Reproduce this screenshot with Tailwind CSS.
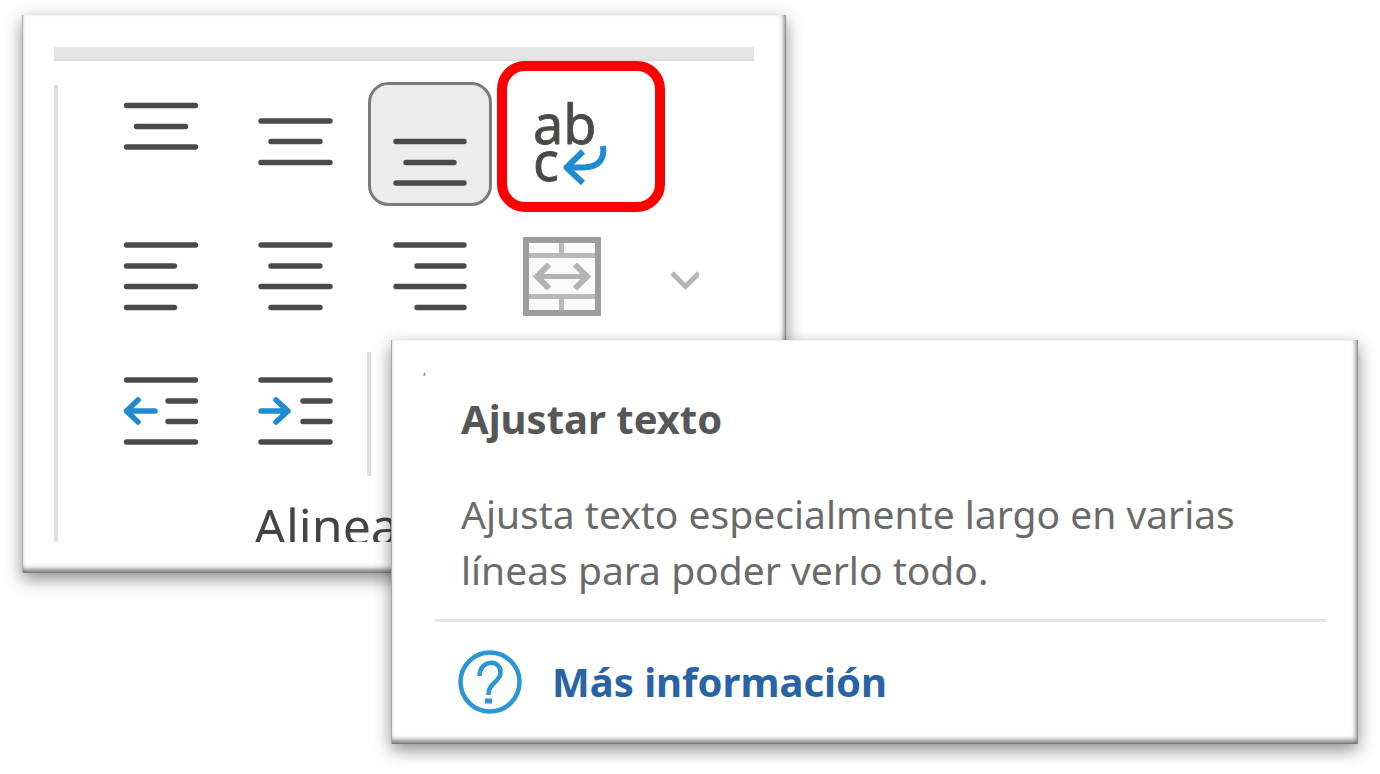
<!DOCTYPE html>
<html lang="es">
<head>
<meta charset="utf-8">
<meta name="viewport" content="width=device-width, initial-scale=1">
<title>Ajustar texto</title>
<script src="https://cdn.jsdelivr.net/npm/@tailwindcss/browser@4"></script>
</head>
<body class="bg-white font-['Noto_Sans','Open_Sans',sans-serif]">
<main class="grid grid-cols-[369px_395px_1fr] grid-rows-[325px_233px_auto] px-[22px] pt-[15px] pb-[29px]">

  <!-- Ribbon group -->
  <section aria-label="Alineación" class="col-start-1 col-end-3 row-start-1 row-end-3 bg-white p-8 shadow-[0_6px_16px_rgba(0,0,0,0.45),inset_1px_0_0_#a8a8a8,inset_-1px_0_0_#8f8f8f,inset_0_-1px_0_#7c7c7c,inset_2px_0_3px_rgba(0,0,0,0.12),inset_-4px_-6px_5px_-2px_rgba(0,0,0,0.5)]">
    <div class="flex h-[495px] flex-col overflow-hidden">
      <div class="h-[14px] shrink-0 border-b-2 border-[#dcdcdc] bg-[#e5e5e5]"></div>
      <div class="mt-6 flex min-h-0 flex-1 border-l-4 border-[#dedede]">
        <div class="-mt-[3px] pl-[41px]">
          <div class="grid grid-cols-[124px_124px_124px_124px_60px] grid-rows-[124px_124px_124px] gap-x-[11px] gap-y-[9px]">
            <button type="button" aria-label="Alinear en la parte superior">
              <svg class="size-full" viewBox="0 0 124 124" fill="none" stroke="#4a4a48" stroke-width="5.4" stroke-linecap="round"><path d="M27.500 23.500H96.500M37.500 44.500H86.500M27.500 65H96.500"/></svg>
            </button>
            <button type="button" aria-label="Alinear en el medio">
              <svg class="size-full" viewBox="0 0 124 124" fill="none" stroke="#4a4a48" stroke-width="5.4" stroke-linecap="round"><path d="M27 39H96M37 59.500H86M27 80.500H96"/></svg>
            </button>
            <button type="button" aria-pressed="true" aria-label="Alinear en la parte inferior">
              <svg class="size-full overflow-visible" viewBox="0 0 124 124" fill="none" stroke="#4a4a48" stroke-width="5.4" stroke-linecap="round"><rect x="0.500" y="1.500" width="121" height="121" rx="19" fill="#ececec" stroke="#7b7b7b" stroke-width="3"/><path d="M27 59.500H95M37 80.500H85M27 101H95"/></svg>
            </button>
            <button type="button" aria-label="Ajustar texto" class="relative">
              <svg class="size-full" viewBox="0 0 124 124" fill="none" stroke-linecap="round" stroke-linejoin="round">
                <g class="font-['Noto_Sans','Open_Sans',sans-serif] text-[54px]" fill="#4a4a48" stroke="#4a4a48" stroke-width="0.8">
                  <text x="29" y="62">ab</text>
                  <text x="29" y="99">c</text>
                </g>
                <path d="M79 69.500L62.500 85.500L79 101M63 85.500H80C94 85 101 78 99 64" stroke="#fff" stroke-width="9" stroke-linecap="butt"/>
                <path d="M79 69.500L62.500 85.500L79 101M63 85.500H80C94 85 101 78 99 64" stroke="#1e8bd2" stroke-width="6" stroke-linecap="butt"/>
              </svg>
              <span class="absolute -top-[21px] -left-[7px] h-[151px] w-[168px] rounded-[28px] border-10 border-[#ff0000]"></span>
            </button>
            <span></span>

            <button type="button" aria-label="Alinear a la izquierda">
              <svg class="size-full" viewBox="0 0 124 124" fill="none" stroke="#4a4a48" stroke-width="5.4" stroke-linecap="round"><path d="M27.500 30H96.500M27.500 51H75.500M27.500 71.500H96.500M27.500 92.500H75.500"/></svg>
            </button>
            <button type="button" aria-label="Centrar">
              <svg class="size-full" viewBox="0 0 124 124" fill="none" stroke="#4a4a48" stroke-width="5.4" stroke-linecap="round"><path d="M27 30H96M37 51H86M27 71.500H96M37 92.500H86"/></svg>
            </button>
            <button type="button" aria-label="Alinear a la derecha">
              <svg class="size-full" viewBox="0 0 124 124" fill="none" stroke="#4a4a48" stroke-width="5.4" stroke-linecap="round"><path d="M27 30H95M48 51H95M27 71.500H95M48 92.500H95"/></svg>
            </button>
            <button type="button" aria-label="Combinar y centrar">
              <svg class="size-full" viewBox="0 0 124 124" fill="none">
                <rect x="22" y="25" width="72" height="73" fill="#fafafa"/>
                <path d="M22 40.500H94M22 81.500H94M57.500 25V40M57.500 82V98" stroke="#b9b9b9" stroke-width="5"/>
                <path d="M33 61.500H83" stroke="#b3b3b3" stroke-width="5"/>
                <path d="M45 49.500L33 61.500L45 73.500M71 49.500L83 61.500L71 73.500" stroke="#b3b3b3" stroke-width="6"/>
                <rect x="22" y="25" width="72" height="73" stroke="#9d9d9d" stroke-width="6"/>
              </svg>
            </button>
            <button type="button" aria-label="Más opciones de combinar">
              <svg class="size-full" viewBox="0 0 60 124" fill="none" stroke="#b5b5b5" stroke-width="5"><path d="M33 58L46.500 71.500L60 58"/></svg>
            </button>

            <button type="button" aria-label="Disminuir sangría">
              <svg class="size-full" viewBox="0 0 124 124" fill="none" stroke-linecap="round" stroke-linejoin="round"><path d="M27.500 32H96.500M69 53H96.500M69 73.500H96.500M27.500 94H96.500" stroke="#4a4a48" stroke-width="5.4"/><path d="M56 63H28M39 52L27.500 63L39 74" stroke="#1e8bd2" stroke-width="5.500"/></svg>
            </button>
            <button type="button" aria-label="Aumentar sangría">
              <svg class="size-full" viewBox="0 0 124 124" fill="none" stroke-linecap="round" stroke-linejoin="round"><path d="M27 32H96M69 53H96M69 73.500H96M27 94H96" stroke="#4a4a48" stroke-width="5.4"/><path d="M27 63H54M42 52L54 63L42 74" stroke="#1e8bd2" stroke-width="5.500"/></svg>
            </button>
            <div class="mt-1 -mb-1 -ml-[2px] border-l-4 border-[#dedede]"></div>
          </div>
          <p class="mt-5 pl-[155px] text-[50px] leading-[68px] text-[#444444]">Alineación</p>
        </div>
      </div>
    </div>
  </section>

  <!-- Tooltip card -->
  <section role="tooltip" class="z-10 col-start-2 col-end-4 row-start-2 row-end-4 bg-white px-8 pt-5 pb-[30px] shadow-[0_6px_16px_rgba(0,0,0,0.45),inset_1px_0_0_#a8a8a8,inset_-1px_0_0_#8f8f8f,inset_0_-1px_0_#7c7c7c,inset_2px_0_3px_rgba(0,0,0,0.12),inset_-4px_-6px_5px_-2px_rgba(0,0,0,0.5)]">
    <p class="h-[31px] text-[12px] leading-[20px] text-[#666666]">,</p>
    <div class="pl-[38px]">
      <h1 class="text-[40px] leading-[56px] font-bold text-[#565656]">Ajustar texto</h1>
      <p class="mt-[39px] text-[39px] leading-[56px] text-[#6a6a6a]">Ajusta texto especialmente largo en varias<br>líneas para poder verlo todo.</p>
    </div>
    <hr class="mt-[21px] ml-3 border-t-3 border-[#e5e5e5]">
    <a href="#" class="mt-[28px] ml-[35px] flex h-[64px] items-center gap-[30px] text-[40px] leading-[56px] font-bold text-[#2763a5]">
      <svg class="size-[64px] shrink-0" viewBox="0 0 64 64" fill="none" stroke="#2c95d6"><circle cx="32" cy="32" r="29.500" fill="#fcfcfc" stroke-width="4.500"/><path d="M21.500 26C22 8 44 10 42.500 23C42 32 30 33 30.500 45" stroke-width="4.500"/><path d="M27 51H34" stroke-width="5"/></svg>
      <span>Más información</span>
    </a>
  </section>
</main>
</body>
</html>
